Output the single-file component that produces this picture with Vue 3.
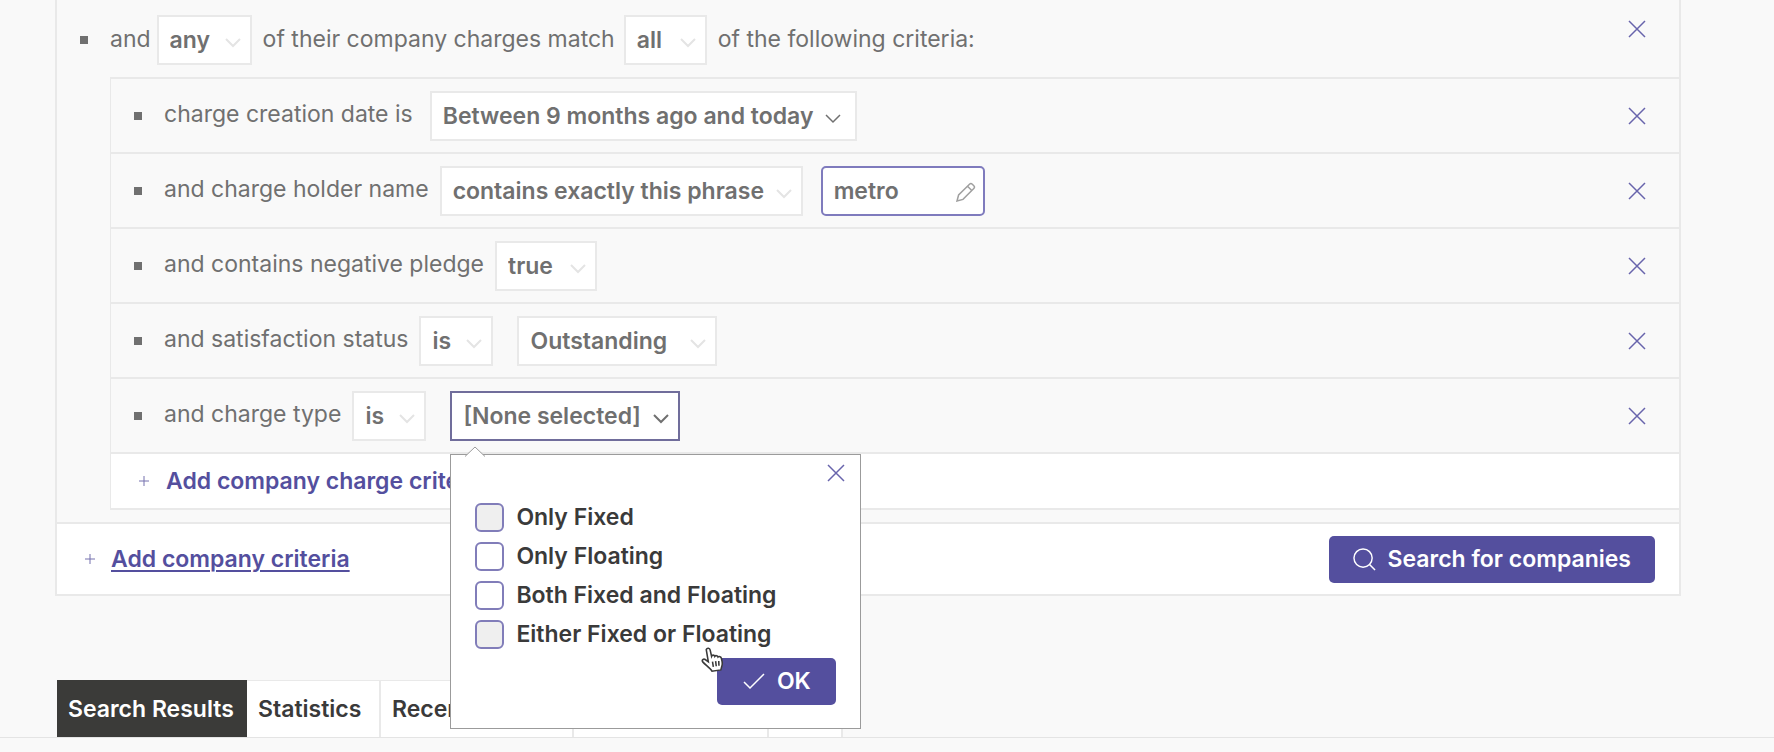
<template>
  <main class="page">
    <form class="builder" @submit.prevent>
      <div class="group">
        <div class="row row-head">
          <span class="bullet"></span>
          <label class="text" for="charge-any">and</label>
          <span class="select-box select-first" :style="{ width: '95px' }">
            <select id="charge-any">
              <option>any</option>
            </select>
            <svg class="chevron" viewBox="0 0 16 10"><path d="M1 1l7 7 7-7" /></svg>
          </span>
          <label class="text" for="charge-all">of their company charges match</label>
          <span class="select-box" :style="{ width: '83px' }">
            <select id="charge-all">
              <option>all</option>
            </select>
            <svg class="chevron" viewBox="0 0 16 10"><path d="M1 1l7 7 7-7" /></svg>
          </span>
          <span class="text">of the following criteria:</span>
          <button type="button" class="icon-btn remove" aria-label="Remove">
            <svg viewBox="0 0 18 18"><path d="M1 1l16 16M17 1L1 17" /></svg>
          </button>
        </div>

        <div class="criteria">
          <div v-for="row in rows" :key="row.id" class="row">
            <span class="bullet"></span>
            <label class="text" :for="row.id + '-0'">{{ row.label }}</label>
            <span
              v-for="(field, i) in row.fields"
              :key="i"
              class="select-box"
              :class="[field.kind, { second: i > 0 }]"
              :style="{ width: field.width + 'px' }"
            >
              <template v-if="field.kind === 'phrase'">
                <input v-model="phrase" type="text" aria-label="Charge holder name" />
                <svg class="pencil" viewBox="0 0 20 20">
                  <path d="M1 19l1.600-6L13.500 2.200a2 2 0 0 1 2.800 0l1.500 1.500a2 2 0 0 1 0 2.800L7 17.400zM11.500 4.200l4.300 4.300" />
                </svg>
              </template>
              <template v-else>
                <select :id="row.id + '-' + i" :aria-label="i > 0 ? row.label : null">
                  <option>{{ field.value }}</option>
                </select>
                <svg class="chevron" viewBox="0 0 16 10"><path d="M1 1l7 7 7-7" /></svg>
              </template>

              <div v-if="field.kind === 'active' && isOpen" class="popup">
                <svg class="arrow" viewBox="0 0 20 11"><path d="M0 10.500L10 1l10 9.500" /></svg>
                <button type="button" class="icon-btn" aria-label="Close" @click="isOpen = false">
                  <svg viewBox="0 0 18 18"><path d="M1 1l16 16M17 1L1 17" /></svg>
                </button>
                <div class="options">
                  <label v-for="option in options" :key="option.name" class="option">
                    <input v-model="option.checked" type="checkbox" :class="{ shaded: option.shaded }" />
                    {{ option.name }}
                  </label>
                </div>
                <button type="button" class="primary ok" @click="isOpen = false">
                  <svg class="check" viewBox="0 0 22 18"><path d="M1 10l6 6L21 2" /></svg>
                  OK
                </button>
                <svg class="hand" viewBox="0 0 22 24">
                  <path
                    d="M5 2.500C5.800.500 8.300.900 8.700 2.800l1.400 6c.500-1.400 2.600-1.400 3.100.200.700-1.100 2.700-.900 3.100.600 1-1 3-.300 3.200 1.200.500 2.200 1.300 4.300.700 6.600L19 22l-8.500 1.200C8.700 20 4.500 17.500 1.600 14.300.400 12.600 2.300 11 4 12l3 2.200z"
                  />
                  <path d="M11 14l.800 5M14 13.500l.600 5M17 13.500l.200 4.500" />
                </svg>
              </div>
            </span>
            <button type="button" class="icon-btn remove" aria-label="Remove">
              <svg viewBox="0 0 18 18"><path d="M1 1l16 16M17 1L1 17" /></svg>
            </button>
          </div>
          <div class="add-charge">
            <svg class="plus" viewBox="0 0 12 12"><path d="M6 1v10M1 6h10" /></svg>
            <a href="#">Add company charge criteria</a>
          </div>
        </div>
      </div>

      <div class="footer">
        <svg class="plus" viewBox="0 0 12 12"><path d="M6 1v10M1 6h10" /></svg>
        <a href="#" class="underlined">Add company criteria</a>
        <button type="submit" class="primary search">
          <svg class="lens" viewBox="0 0 24 24"><circle cx="10.500" cy="10.500" r="9.500" /><path d="M17 17l6 6" /></svg>
          Search for companies
        </button>
      </div>
    </form>

    <nav class="tabs">
      <button
        v-for="tab in tabs"
        :key="tab.name"
        type="button"
        class="tab"
        :class="{ current: tab.name === current }"
        :style="{ width: tab.width + 'px' }"
        @click="current = tab.name"
      >
        {{ tab.name }}
      </button>
    </nav>
  </main>
</template>

<script setup>
import { ref } from 'vue';

const isOpen = ref(true);
const phrase = ref('metro');
const current = ref('Search Results');

const rows = [
  {
    id: 'created',
    label: 'charge creation date is',
    fields: [{ kind: 'enabled', value: 'Between 9 months ago and today', width: 427 }]
  },
  {
    id: 'holder',
    label: 'and charge holder name',
    fields: [
      { kind: 'plain', value: 'contains exactly this phrase', width: 363 },
      { kind: 'phrase', width: 164 }
    ]
  },
  {
    id: 'pledge',
    label: 'and contains negative pledge',
    fields: [{ kind: 'plain', value: 'true', width: 102 }]
  },
  {
    id: 'status',
    label: 'and satisfaction status',
    fields: [
      { kind: 'plain', value: 'is', width: 74 },
      { kind: 'plain', value: 'Outstanding', width: 200 }
    ]
  },
  {
    id: 'type',
    label: 'and charge type',
    fields: [
      { kind: 'plain', value: 'is', width: 74 },
      { kind: 'active', value: '[None selected]', width: 230 }
    ]
  }
];

const options = ref([
  { name: 'Only Fixed', checked: false, shaded: true },
  { name: 'Only Floating', checked: false, shaded: false },
  { name: 'Both Fixed and Floating', checked: false, shaded: false },
  { name: 'Either Fixed or Floating', checked: false, shaded: true }
]);

const tabs = [
  { name: 'Search Results', width: 190 },
  { name: 'Statistics', width: 134 },
  { name: 'Recent Charges', width: 193 },
  { name: 'Saved Searches', width: 195 },
  { name: 'Help', width: 74 }
];
</script>

<style>
body {
  background-color: #f9f9f9;
}
</style>

<style scoped>
.page {
  font-family: Inter, "Liberation Sans", sans-serif;
  font-size: 23px;
  line-height: 28px;
  color: #707070;
}

.page * {
  box-sizing: border-box;
}

svg {
  fill: none;
  stroke: currentColor;
  display: block;
}

button,
input,
select {
  font: inherit;
  color: inherit;
  margin: 0;
}

a {
  color: #544f9e;
  font-weight: 600;
  text-decoration: none;
}

.builder {
  margin: 0 93px 0 55px;
  border: 2px solid #e9e9e9;
  border-top: none;
}

.group {
  padding-bottom: 12px;
}

.row {
  display: flex;
  align-items: center;
  height: 75px;
  padding: 0 33px 0 23px;
  border-bottom: 2px solid #e9e9e9;
}

.row-head {
  height: 77px;
  padding-top: 3px;
  border-bottom: none;
}

.bullet {
  width: 8px;
  height: 8px;
  margin-right: 22px;
  background-color: #707070;
}

.text {
  padding-bottom: 2px;
  white-space: nowrap;
}

.criteria .text {
  padding-bottom: 4px;
}

.select-box {
  position: relative;
  height: 50px;
  margin: 0 12px 0 11px;
}

.select-first {
  margin-left: 6px;
}

.row-head .select-box {
  margin-right: 11px;
}

.select-box.enabled {
  margin-left: 17px;
}

.select-box.second {
  margin-left: 12px;
}

.select-box.second.phrase {
  margin-left: 6px;
}

.row-head .select-first {
  margin-left: 6px;
}

.row-head .select-box:not(.select-first) {
  margin-left: 9px;
}

.select-box select,
.select-box > input {
  appearance: none;
  width: 100%;
  height: 50px;
  padding: 0 11px;
  border: 2px solid #e9e9e9;
  border-radius: 0;
  background-color: #fff;
  font-weight: 600;
  outline: none;
}

.select-box > input {
  border: 2px solid #7f7bbd;
  border-radius: 5px;
}

.active select {
  border-color: #706d9b;
}

.chevron {
  position: absolute;
  top: 23px;
  right: 11px;
  width: 16px;
  height: 10px;
  stroke-width: 2;
  color: #e4e4e4;
  pointer-events: none;
}

.enabled .chevron {
  right: 16px;
  color: #707070;
  stroke-width: 1.500;
}

.active .chevron {
  color: #707070;
}

.pencil {
  position: absolute;
  top: 16px;
  right: 9px;
  width: 20px;
  height: 20px;
  color: #a0a0a0;
  stroke-width: 1.500;
}

.icon-btn {
  display: block;
  width: 18px;
  height: 18px;
  padding: 0;
  border: none;
  background: none;
  color: #6864ac;
  stroke-width: 1.500;
  cursor: pointer;
}

.icon-btn svg {
  width: 18px;
  height: 18px;
}

.remove {
  margin-left: auto;
}

.row-head .remove {
  align-self: flex-start;
  margin-top: 17px;
}

.criteria {
  margin-left: 53px;
  border: 2px solid #e9e9e9;
  border-left-width: 1px;
  border-right: none;
}

.add-charge {
  display: flex;
  align-items: center;
  gap: 16px;
  height: 54px;
  padding-left: 27px;
  background-color: #fff;
}

.plus {
  width: 12px;
  height: 12px;
  color: #7571ae;
}

.footer {
  display: flex;
  align-items: center;
  gap: 15px;
  height: 72px;
  padding: 0 24px 0 27px;
  border-top: 2px solid #e9e9e9;
  background-color: #fff;
}

.underlined {
  text-decoration: underline;
  text-decoration-thickness: 2px;
  text-underline-offset: 3px;
}

.primary {
  display: flex;
  align-items: center;
  justify-content: center;
  gap: 12px;
  height: 47px;
  border: none;
  border-radius: 5px;
  background-color: #544f9e;
  color: #fff;
  font-weight: 600;
  cursor: pointer;
}

.search {
  margin-left: auto;
  padding: 0 24px;
}

.lens {
  width: 23px;
  height: 23px;
  stroke-width: 1.500;
}

.popup {
  position: absolute;
  top: 63px;
  left: 0;
  z-index: 10;
  display: flex;
  flex-direction: column;
  width: 411px;
  padding: 9px 15px 23px 24px;
  border: 1px solid #9b9b9b;
  background-color: #fff;
  color: #3a3a3a;
}

.popup > .icon-btn {
  align-self: flex-end;
}

.arrow {
  position: absolute;
  top: -9px;
  left: 14px;
  width: 20px;
  height: 11px;
  fill: #fff;
  stroke: #9b9b9b;
}

.options {
  margin-top: 16px;
}

.option {
  display: flex;
  align-items: center;
  gap: 12px;
  height: 39px;
  font-weight: 600;
  white-space: nowrap;
}

.option input {
  appearance: none;
  width: 29px;
  height: 29px;
  border: 2px solid #817db9;
  border-radius: 6px;
  background-color: #fff;
}

.option .shaded {
  background-color: #efefef;
}

.ok {
  align-self: flex-end;
  width: 119px;
  margin-top: 4px;
  margin-right: 9px;
}

.check {
  width: 22px;
  height: 18px;
  stroke-width: 1.500;
}

.hand {
  position: absolute;
  top: 192px;
  left: 250px;
  width: 23px;
  height: 25px;
  fill: #fff;
  stroke: #3a3a3a;
  stroke-width: 1.500;
}

.tabs {
  display: flex;
  margin-top: 84px;
  padding-left: 57px;
  border-bottom: 1px solid #e4e4e4;
}

.tab {
  height: 57px;
  padding: 0 11px;
  border: 1px solid #e9e9e9;
  border-width: 1px 2px 0 0;
  background-color: #fff;
  color: #3a3a3a;
  font-weight: 600;
  text-align: left;
  white-space: nowrap;
}

.tab.current {
  border-color: #3b3b39;
  background-color: #3b3b39;
  color: #fff;
}
</style>
